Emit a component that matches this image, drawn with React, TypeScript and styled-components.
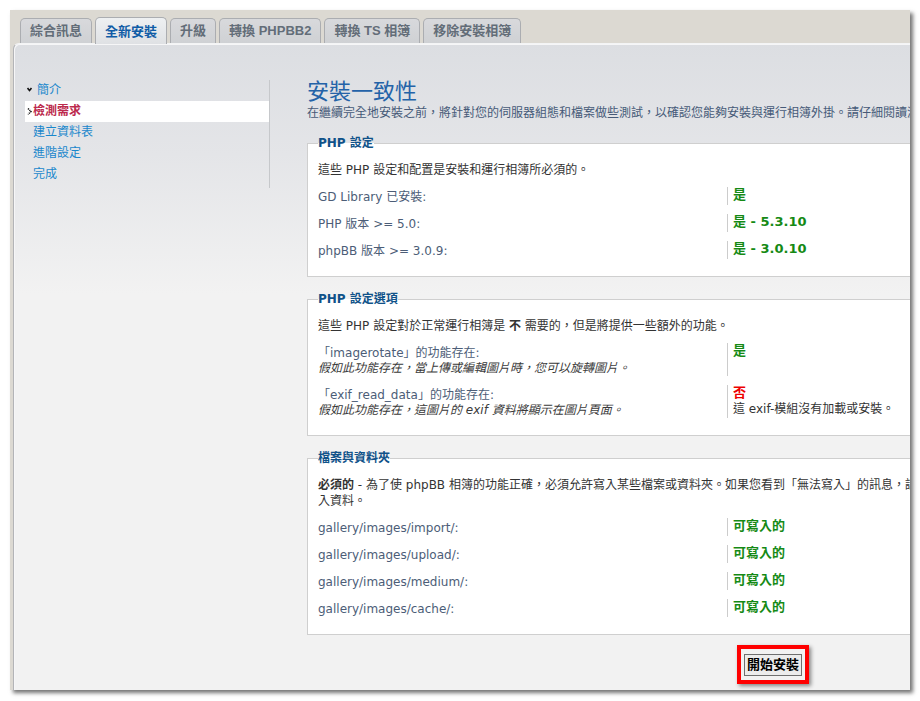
import styled, { createGlobalStyle } from 'styled-components';

const GlobalStyle = createGlobalStyle`
    html, body {
        margin:0;
        padding:0;
        background:#fff;
    }
    body {
        font-family:"DejaVu Sans", "Noto Sans CJK TC", sans-serif;
        font-size:12px;
    }
`

const Frame = styled.div`
    margin:10px;
    width:900px;
    height:680px;
    box-sizing:border-box;
    padding-left:3px;
    background:#dcd9d2;
    box-shadow:3px 3px 4px rgba(0,0,0,.55);
    overflow:hidden;
    display:flex;
    flex-direction:column;
`

const TabBar = styled.ul`
    display:flex;
    align-items:flex-end;
    gap:3px;
    height:33px;
    box-sizing:border-box;
    margin:0;
    padding:7px 0 0 7px;
    list-style:none;
`

const Tab = styled.li<{ $active?: boolean }>`
    position:relative;
    z-index:${props => props.$active ? 2 : 0};
    height:${props => props.$active ? '27px' : '25px'};
    margin-bottom:${props => props.$active ? '-1px' : '0'};
    box-sizing:border-box;
    padding:0 9px;
    border:1px solid #abadb1;
    border-bottom:none;
    border-radius:5px 5px 0 0;
    background:${props => props.$active ? 'linear-gradient(#eef0f2, #dfe1e4)' : 'linear-gradient(#d8d9dc, #cfd1d4)'};
    color:${props => props.$active ? '#105ca6' : '#636d78'};
    font-family:"Liberation Sans", "Noto Sans CJK TC", sans-serif;
    font-size:13px;
    font-weight:700;
    line-height:${props => props.$active ? '27px' : '24px'};
    white-space:nowrap;
`

const Panel = styled.div`
    flex:1;
    display:flex;
    align-items:flex-start;
    padding:35px 0 0 11px;
    border-top:1px solid #f3f4f5;
    border-left:1px solid #b3b4b7;
    border-top-left-radius:6px;
    box-shadow:inset 1px 1px 0 #f6f6f7;
    background:linear-gradient(#dcdee2 0, #e4e5e8 110px, #f2f2f2 250px, #f2f2f2 100%);
    position:relative;
    z-index:1;
`

const Menu = styled.ul`
    width:245px;
    box-sizing:border-box;
    flex-shrink:0;
    margin:1px 0 0;
    padding:0 0 3px;
    list-style:none;
    border-right:1px solid #c6c8cb;
`

const MenuItem = styled.li<{ $active?: boolean; $indent?: number }>`
    position:relative;
    height:21px;
    line-height:20px;
    padding-left:${props => props.$indent ?? 8}px;
    background:${props => props.$active ? '#fff' : 'transparent'};
    color:${props => props.$active ? '#bc2a4d' : '#1a87cc'};
    font-weight:${props => props.$active ? 700 : 400};

    svg {
        position:absolute;
        left:2px;
        top:7px;
    }
`

const Main = styled.div`
    width:932px;
    flex-shrink:0;
    margin-left:37px;
`

const Title = styled.h1`
    margin:0;
    font-size:22px;
    line-height:26px;
    font-weight:400;
    color:#2463a8;
`

const Lead = styled.p`
    margin:0;
    line-height:16px;
    color:#465a78;
    white-space:nowrap;
`

const Box = styled.fieldset`
    margin:14px 0 0;
    padding:0 10px 17px;
    min-width:0;
    border:1px solid #cfcfcf;
    background:#fff;
`

const Legend = styled.legend`
    padding:0;
    font-weight:700;
    line-height:16px;
    color:#105289;
`

const Intro = styled.p`
    margin:11px 0 0;
    line-height:16px;
    color:#333;
`

const Rows = styled.div`
    display:flex;
    flex-direction:column;
    gap:9px;
    margin-top:9px;
`

const Row = styled.div`
    display:grid;
    grid-template-columns:409px 1fr;
`

const Label = styled.div`
    padding-top:2px;
    line-height:16px;
    color:#4c5d77;
`

const Explain = styled.div`
    line-height:15px;
    font-style:italic;
    color:#3a3a3a;
`

const Value = styled.div`
    min-height:18px;
    padding-left:5px;
    border-left:1px solid #cccccc;
    line-height:16px;
    color:#333;
`

const Status = styled.div<{ $ok?: boolean }>`
    font-size:13px;
    font-weight:700;
    color:${props => props.$ok ? '#158a15' : '#ee0000'};
`

const ButtonRow = styled.div`
    margin-top:10px;
    text-align:center;
`

const Highlight = styled.span`
    display:inline-block;
    padding:5px 3px 4px;
    border:4px solid #ff0000;
    box-shadow:2px 2px 4px rgba(0,0,0,.45);
`

const Button = styled.button`
    display:block;
    height:22px;
    margin:0;
    padding:0 2px;
    border:1px solid #6f6f6f;
    background:#ececec;
    color:#000;
    font-family:inherit;
    font-size:13px;
    font-weight:700;
    line-height:20px;
`

const DownMark = () => (
    <svg width="5" height="5" viewBox="0 0 5 5">
        <path d="M0.5 1 L2.5 3.5 L4.5 1" fill="none" stroke="#111" strokeWidth="1.6" />
    </svg>
)

const RightMark = () => (
    <svg width="5" height="7" viewBox="0 0 5 7">
        <path d="M1 0.5 L4 3.5 L1 6.5" fill="none" stroke="#111" strokeWidth="1.5" strokeDasharray="1.2 0.8" />
    </svg>
)

const tabs = ['綜合訊息', '全新安裝', '升級', '轉換 PHPBB2', '轉換 TS 相簿', '移除安裝相簿'];

const folders = ['gallery/images/import/:', 'gallery/images/upload/:', 'gallery/images/medium/:', 'gallery/images/cache/:'];

function App() {
    return (
        <>
            <GlobalStyle />
            <Frame>
                <TabBar>
                    {tabs.map(t => <Tab key={t} $active={t === '全新安裝'}>{t}</Tab>)}
                </TabBar>
                <Panel>
                    <Menu>
                        <MenuItem $indent={12}><DownMark />簡介</MenuItem>
                        <MenuItem $active><RightMark />檢測需求</MenuItem>
                        <MenuItem>建立資料表</MenuItem>
                        <MenuItem>進階設定</MenuItem>
                        <MenuItem>完成</MenuItem>
                    </Menu>
                    <Main>
                        <Title>安裝一致性</Title>
                        <Lead>在繼續完全地安裝之前，將針對您的伺服器組態和檔案做些測試，以確認您能夠安裝與運行相簿外掛。請仔細閱讀測試結果，並且在全部通過之前不要繼續。</Lead>

                        <Box>
                            <Legend>PHP 設定</Legend>
                            <Intro>這些 PHP 設定和配置是安裝和運行相簿所必須的。</Intro>
                            <Rows>
                                <Row>
                                    <Label>GD Library 已安裝:</Label>
                                    <Value><Status $ok>是</Status></Value>
                                </Row>
                                <Row>
                                    <Label>PHP 版本 &gt;= 5.0:</Label>
                                    <Value><Status $ok>是 - 5.3.10</Status></Value>
                                </Row>
                                <Row>
                                    <Label>phpBB 版本 &gt;= 3.0.9:</Label>
                                    <Value><Status $ok>是 - 3.0.10</Status></Value>
                                </Row>
                            </Rows>
                        </Box>

                        <Box>
                            <Legend>PHP 設定選項</Legend>
                            <Intro>這些 PHP 設定對於正常運行相簿是 <b>不</b> 需要的，但是將提供一些額外的功能。</Intro>
                            <Rows>
                                <Row>
                                    <Label>
                                        「imagerotate」的功能存在:
                                        <Explain>假如此功能存在，當上傳或編輯圖片時，您可以旋轉圖片。</Explain>
                                    </Label>
                                    <Value><Status $ok>是</Status></Value>
                                </Row>
                                <Row>
                                    <Label>
                                        「exif_read_data」的功能存在:
                                        <Explain>假如此功能存在，這圖片的 exif 資料將顯示在圖片頁面。</Explain>
                                    </Label>
                                    <Value>
                                        <Status>否</Status>
                                        這 exif-模組沒有加載或安裝。
                                    </Value>
                                </Row>
                            </Rows>
                        </Box>

                        <Box>
                            <Legend>檔案與資料夾</Legend>
                            <Intro>
                                <b>必須的</b> - 為了使 phpBB 相簿的功能正確，必須允許寫入某些檔案或資料夾。如果您看到「無法寫入」的訊息，請變更權限以允許寫<br />
                                入資料。
                            </Intro>
                            <Rows>
                                {folders.map(f => (
                                    <Row key={f}>
                                        <Label>{f}</Label>
                                        <Value><Status $ok>可寫入的</Status></Value>
                                    </Row>
                                ))}
                            </Rows>
                        </Box>

                        <ButtonRow>
                            <Highlight>
                                <Button type="button">開始安裝</Button>
                            </Highlight>
                        </ButtonRow>
                    </Main>
                </Panel>
            </Frame>
        </>
    )
}

export default App;
